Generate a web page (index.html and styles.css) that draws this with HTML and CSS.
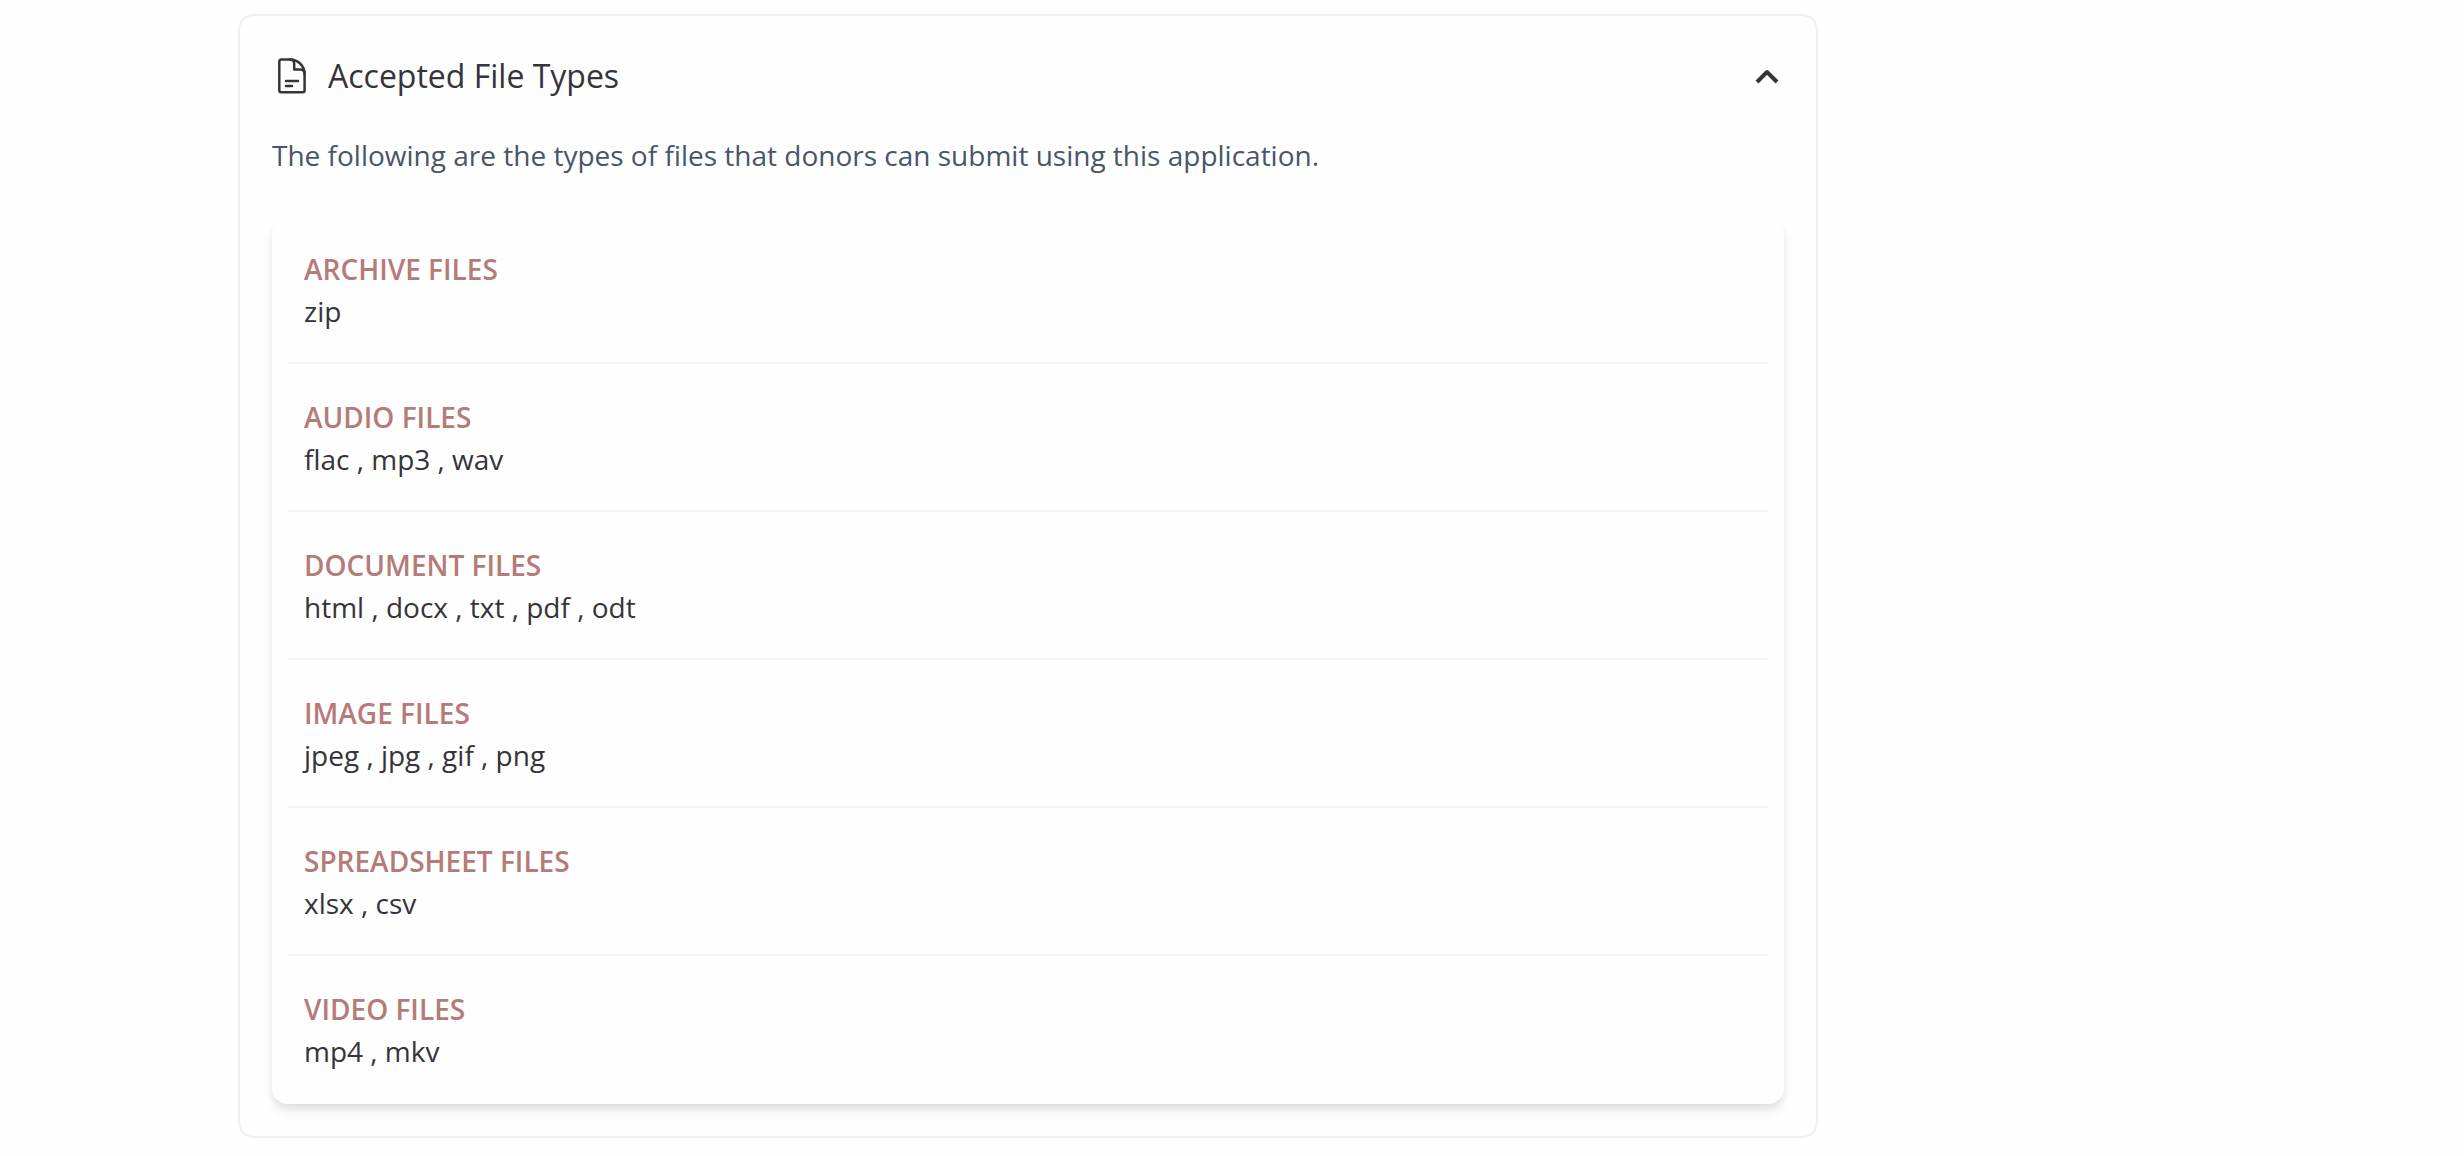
FILE: index.html
```html
<!DOCTYPE html>
<html lang="en">
<head>
  <meta charset="UTF-8">
  <meta name="viewport" content="width=device-width, initial-scale=1.0">
  <title>Accepted File Types</title>
  <link rel="stylesheet" href="styles.css">
</head>
<body>
  <main class="page">
    <section class="panel">
      <h2 class="panel-title">
        <button class="panel-toggle" type="button" aria-expanded="true" aria-controls="fileTypes">
          <svg class="icon-file" viewBox="0 0 40 40" aria-hidden="true">
            <path d="M18 3.5H9.3a2 2 0 0 0-2 2v28.7a2 2 0 0 0 2 2h21.3a2 2 0 0 0 2-2V18C32.6 10 26 3.5 18 3.5z"/>
            <path d="M18 3.5c2.800 0 4.200 1.500 4.200 4.300v5.700h5.700c3.200 0 4.700 1.500 4.700 4.500"/>
            <path d="M14 25h12M14 30h6"/>
          </svg>
          <span class="panel-label">Accepted File Types</span>
          <svg class="icon-chevron" viewBox="0 0 26 26" aria-hidden="true">
            <path d="M3 19l10-10 10 10"/>
          </svg>
        </button>
      </h2>

      <div id="fileTypes">
        <p class="intro">The following are the types of files that donors can submit using this application.</p>

        <dl class="types">
          <div class="type">
            <dt>Archive Files</dt>
            <dd>zip</dd>
          </div>
          <div class="type">
            <dt>Audio Files</dt>
            <dd>flac , mp3 , wav</dd>
          </div>
          <div class="type">
            <dt>Document Files</dt>
            <dd>html , docx , txt , pdf , odt</dd>
          </div>
          <div class="type">
            <dt>Image Files</dt>
            <dd>jpeg , jpg , gif , png</dd>
          </div>
          <div class="type">
            <dt>Spreadsheet Files</dt>
            <dd>xlsx , csv</dd>
          </div>
          <div class="type">
            <dt>Video Files</dt>
            <dd>mp4 , mkv</dd>
          </div>
        </dl>
      </div>
    </section>
  </main>
</body>
</html>
```
FILE: styles.css
```css
* {
  box-sizing: border-box;
}
body {
  margin: 0;
  background: #fefefe;
  color: #35343b;
  font-family: "Open Sans", sans-serif;
  font-size: 28px;
  line-height: 42px;
}
.page {
  padding: 14px 16px 16px 238px;
}
.panel {
  max-width: 1580px;
  padding: 32px;
  border: 2px solid #f0f0f0;
  border-radius: 16px;
}

/* Header */
.panel-title {
  margin: 0;
}
.panel-toggle {
  display: flex;
  align-items: center;
  gap: 16px;
  width: 100%;
  padding: 4px 4px 4px 0;
  border: none;
  background: none;
  color: inherit;
  font-family: inherit;
  font-size: 32px;
  font-weight: 500;
  line-height: 48px;
  text-align: left;
  cursor: pointer;
}
.panel-label {
  flex: 1;
}
.icon-file,
.icon-chevron {
  fill: none;
  stroke: currentColor;
  stroke-linecap: round;
  stroke-linejoin: round;
}
.icon-file {
  width: 40px;
  height: 40px;
  stroke-width: 2.5;
}
.icon-chevron {
  width: 26px;
  height: 26px;
  stroke-width: 4;
  stroke-linecap: butt;
}

.intro {
  margin: 30px 0 40px;
  color: #4a5568;
}

/* File type list */
.types {
  margin: 0;
  padding: 0 16px;
  border-radius: 16px;
  background: #fefefe;
  box-shadow: 0 8px 12px -2px rgba(0, 0, 0, 0.1), 0 4px 8px -2px rgba(0, 0, 0, 0.06);
}
.type {
  padding: 32px 16px 30px;
  border-bottom: 2px solid #f3f3f3;
}
.type:last-child {
  border-bottom-color: transparent;
}
.type dt {
  color: #b57b78;
  font-weight: 600;
  text-transform: uppercase;
}
.type dd {
  margin: 0;
}
```
